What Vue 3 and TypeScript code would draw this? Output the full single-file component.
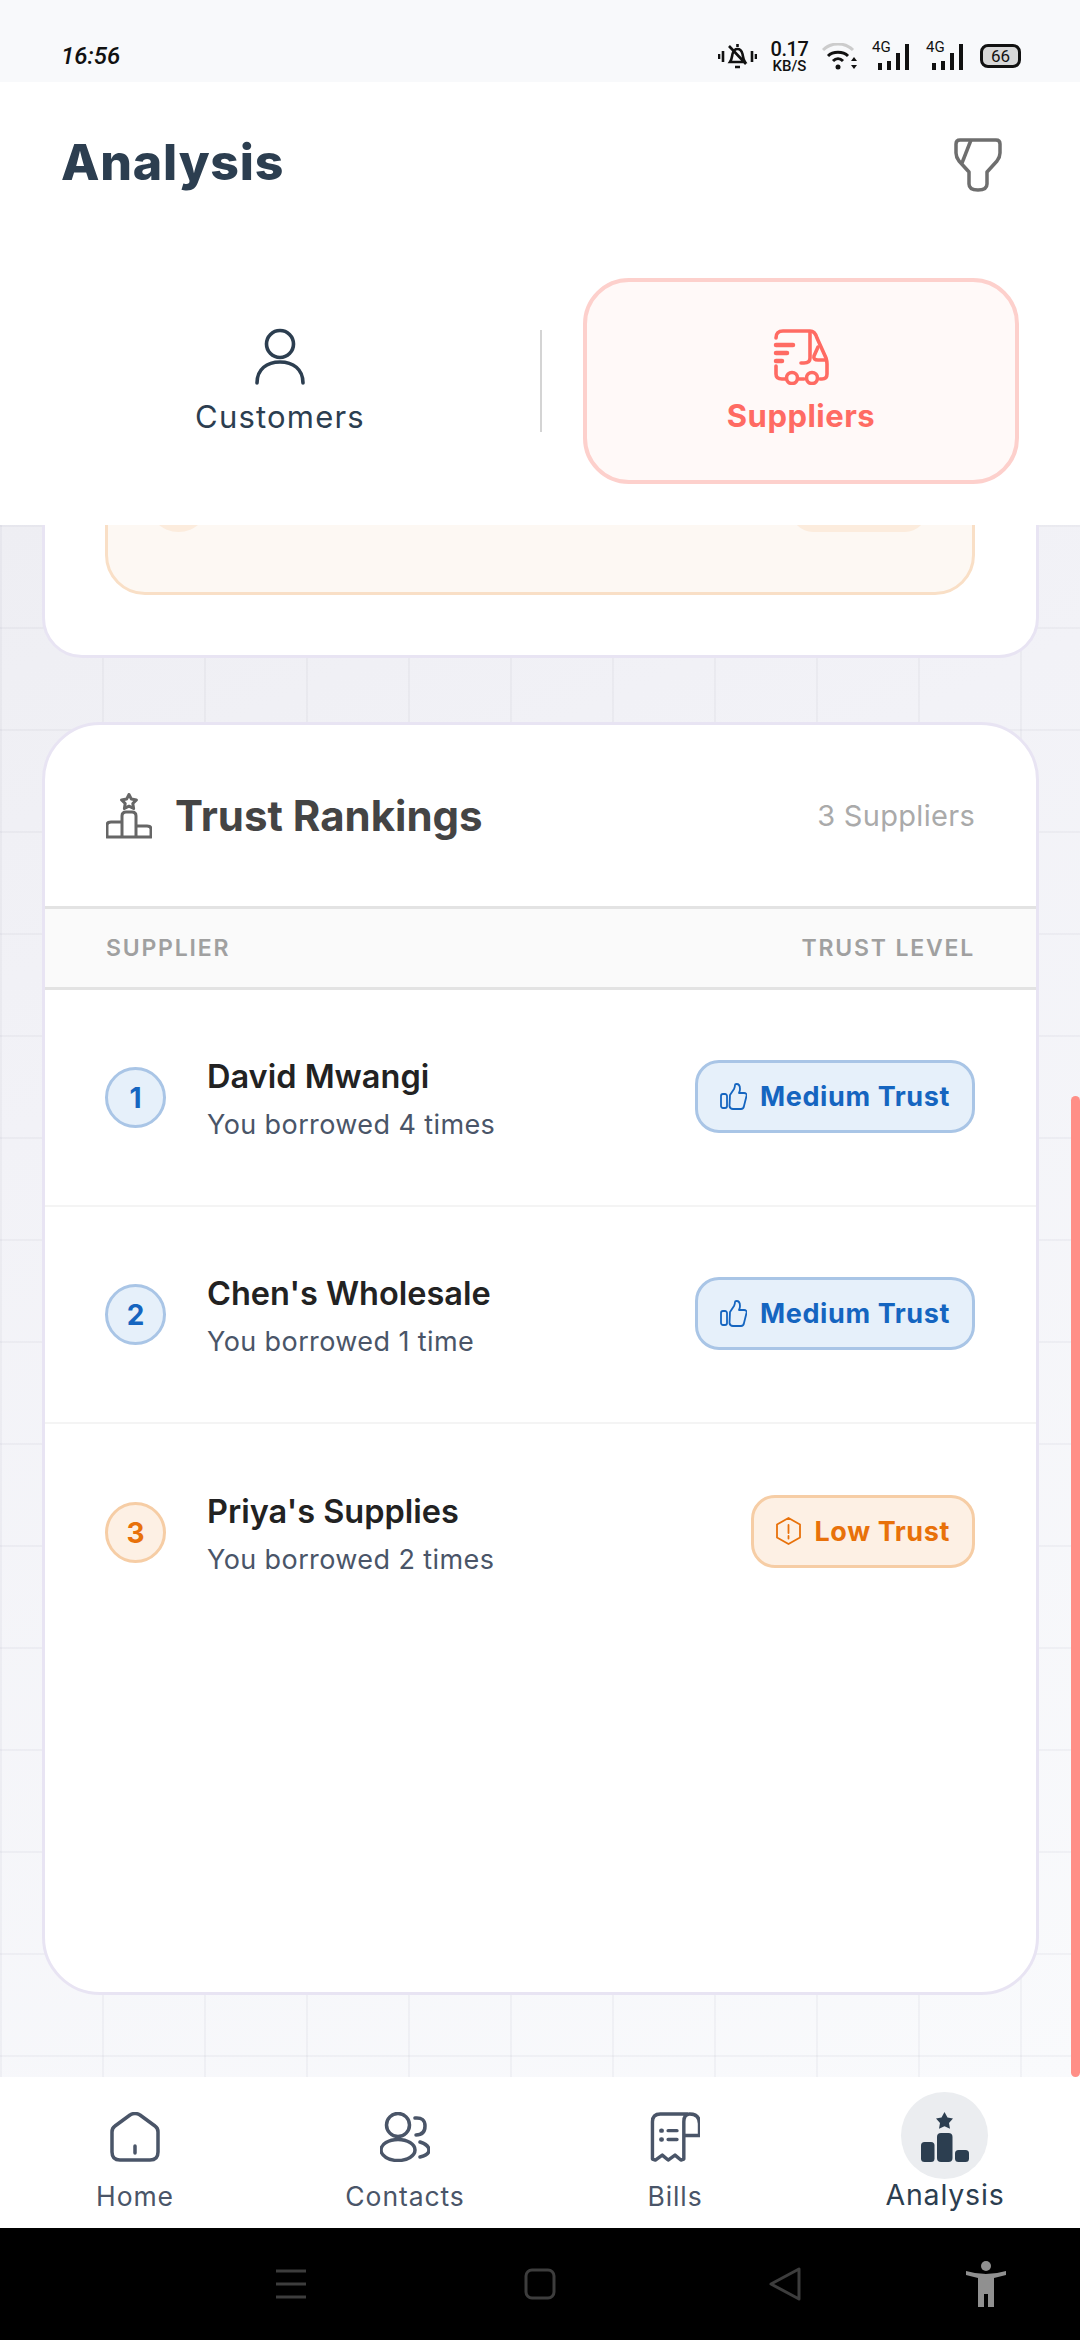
<template>
  <div class="phone">
    <!-- status bar -->
    <div class="status">
      <span class="time">16:56</span>
      <div class="status-right">
        <svg width="39" height="27" viewBox="0 0 39 27" fill="none" stroke="#111" stroke-width="2.6">
          <path d="M19.5 1v3M12 19c2-3 2-6 2.500-8 .8-3 3-5 5-5s4.200 2 5 5c.5 2 .5 5 2.500 8zM17 24h5M11 3l17 18" />
          <path d="M1 11v5M5 8v11M34 8v11M38 11v5" />
        </svg>
        <div class="speed"><b>0.17</b><small>KB/S</small></div>
        <svg width="36" height="27" viewBox="0 0 36 27" fill="none" stroke="#111" stroke-width="3">
          <path d="M1 7C9 -1 23 -1 31 7" stroke="#ccc" />
          <path d="M6 13c5-5 15-5 20 0M11 18c3-3 7-3 10 0" />
          <circle cx="16" cy="24" r="2.500" fill="#111" stroke="none" />
          <path d="M32 14l-3 4h6zM32 26l-3-4h6z" fill="#111" stroke="none" />
        </svg>
        <div v-for="n in 2" :key="n" class="sim">
          <span class="g">4G</span>
          <i style="height: 7px"></i><i style="height: 9px"></i><i style="height: 17px"></i><i style="height: 26px"></i>
        </div>
        <div class="battery"><span>66</span></div>
      </div>
    </div>

    <!-- header + tabs -->
    <header class="head">
      <div class="title-row">
        <h1>Analysis</h1>
        <svg class="filter" width="48" height="54" viewBox="0 0 48 54" fill="none" stroke="#6e6e6e" stroke-width="3.5" stroke-linejoin="round">
          <path d="M6 2H42Q46 2 46 6V15Q46 19 43 23L33 34V46Q33 52 24 52Q15 52 15 46V34L5 23Q2 19 2 15V6Q2 2 6 2Z" />
          <path d="M17 2L8 25" />
        </svg>
      </div>
      <div class="tabs">
        <div class="tab">
          <svg width="50" height="58" viewBox="0 0 50 58" fill="none" stroke="#2c3e50" stroke-width="3.6" stroke-linecap="round">
            <circle cx="25" cy="16" r="13.500" />
            <path d="M2 55c0-14 10-21 23-21s23 7 23 21" />
          </svg>
          <span>Customers</span>
        </div>
        <div class="sep"></div>
        <div class="tab active">
          <svg width="56" height="56" viewBox="0 0 56 56" fill="none" stroke="#ff6b63" stroke-width="3.6" stroke-linecap="round" stroke-linejoin="round">
            <path d="M3 9q0-7 7-7h27q5 0 7 7l9 20q1 3 1 6v10q0 5-5 5h-2M3 37v8q0 5 6 5h3M26 50h5" />
            <path d="M37 3v26q0 5-6 5h-3M45 18l-4 9q-1 4 4 4h8" />
            <circle cx="19" cy="49" r="5.500" />
            <circle cx="39" cy="49" r="5.500" />
            <path d="M3 16h17" stroke-width="4.500" />
            <path d="M3 24h11" stroke-width="4.500" />
            <path d="M3 32h6" stroke-width="4.500" />
          </svg>
          <span>Suppliers</span>
        </div>
      </div>
    </header>

    <!-- scrolled content -->
    <main class="scroll">
      <section class="card card-top">
        <div class="warn-box">
          <div class="warn-dot"></div>
          <div class="warn-pill"></div>
        </div>
      </section>

      <section class="card card-rank">
        <div class="rank-head">
          <div class="rank-title">
            <svg width="46" height="46" viewBox="0 0 46 46" fill="none" stroke="#666" stroke-width="3" stroke-linejoin="round">
              <path d="M23 1.500l2.400 4.600 5 .8-3.600 3.600.8 5-4.600-2.300-4.600 2.300.8-5-3.600-3.600 5-.8z" />
              <path d="M16 44V23q0-4 4-4h6q4 0 4 4v21M16 29H5q-4 0-4 3v12h44v-8q0-3-4-3H30" />
            </svg>
            <h2>Trust Rankings</h2>
          </div>
          <span class="count">3 Suppliers</span>
        </div>
        <div class="table-head">
          <span>SUPPLIER</span>
          <span>TRUST LEVEL</span>
        </div>
        <div v-for="s in suppliers" :key="s.rank" class="row">
          <div class="rank" :class="s.level">{{ s.rank }}</div>
          <div class="who">
            <div class="name">{{ s.name }}</div>
            <div class="sub">{{ s.sub }}</div>
          </div>
          <div class="badge" :class="s.level">
            <svg v-if="s.level === 'medium'" width="27" height="27" viewBox="0 0 27 27" fill="none" stroke="currentColor" stroke-width="1.800" stroke-linejoin="round">
              <rect x="1" y="11" width="6" height="14" rx="2" />
              <path d="M10 12l4-6q1-2 1-4 0-1 1.500-1 3.500 0 3.500 5 0 2-1 4h5q3 0 2.500 3l-2.500 10q-.5 3-3 3h-8q-3 0-3.500-3z" />
            </svg>
            <svg v-else width="25" height="28" viewBox="0 0 25 28" fill="none" stroke="currentColor" stroke-width="1.800" stroke-linejoin="round">
              <path d="M12.500 1L24 7.500v13L12.500 27 1 20.500v-13z" />
              <path d="M12.500 8v8M12.500 19v2.500" stroke-linecap="round" />
            </svg>
            <span>{{ s.label }}</span>
          </div>
        </div>
      </section>

      <div class="scrollbar"></div>
    </main>

    <!-- bottom navigation -->
    <nav class="nav">
      <div class="nav-item">
        <svg width="50" height="50" viewBox="0 0 50 50" fill="none" stroke="#4a5568" stroke-width="3.500" stroke-linecap="round" stroke-linejoin="round">
          <path d="M2 20q0-4 3-6L20 3q5-3 10 0l15 11q3 2 3 6v20q0 8-8 8H10q-8 0-8-8z" />
          <path d="M25 34v7" />
        </svg>
        <span>Home</span>
      </div>
      <div class="nav-item">
        <svg width="50" height="50" viewBox="0 0 50 50" fill="none" stroke="#4a5568" stroke-width="3.500" stroke-linecap="round">
          <circle cx="18" cy="13" r="11.500" />
          <ellipse cx="18" cy="38" rx="17" ry="10.500" />
          <path d="M35 6q10-1 10 8t-9 9M40 30q9 3 9 8t-9 7" />
        </svg>
        <span>Contacts</span>
      </div>
      <div class="nav-item">
        <svg width="50" height="50" viewBox="0 0 50 51" fill="none" stroke="#4a5568" stroke-width="3.500" stroke-linecap="round" stroke-linejoin="round">
          <path d="M38 2H10q-8 0-8 8v38l3 1 7-5 6 5 7-5 6 5 3-1V10q0-8 6-8q10 0 10 10v12H36" />
          <path d="M18 19h9M18 28h9" />
          <path d="M11 19h.5M11 28h.5" stroke-width="4.500" />
        </svg>
        <span>Bills</span>
      </div>
      <div class="nav-item on">
        <div class="halo"></div>
        <svg width="48" height="50" viewBox="0 0 48 50" fill="#2c3e50">
          <path d="M23.500 0l3 5.500 5.500 1-4 4.500 1 5.800-5.500-2.600-5.500 2.600 1-5.800-4-4.500 5.500-1z" />
          <rect x="0" y="30" width="13.500" height="20" rx="3.500" />
          <rect x="16" y="21" width="15.500" height="29" rx="4" />
          <rect x="34" y="38" width="14" height="12" rx="3.500" />
        </svg>
        <span>Analysis</span>
      </div>
    </nav>

    <!-- android buttons -->
    <div class="sys">
      <svg width="32" height="30" viewBox="0 0 32 30" stroke="#3d3d3d" stroke-width="3"><path d="M1 2h30M1 15h30M1 28h30" /></svg>
      <svg width="32" height="32" viewBox="0 0 32 32" fill="none" stroke="#3d3d3d" stroke-width="3"><rect x="2" y="2" width="28" height="28" rx="6" /></svg>
      <svg width="33" height="34" viewBox="0 0 33 34" fill="none" stroke="#3d3d3d" stroke-width="3" stroke-linejoin="round"><path d="M30 2v30L2 17z" /></svg>
      <svg width="40" height="46" viewBox="0 0 40 46" fill="#909090">
        <circle cx="20" cy="5" r="5" />
        <path d="M0 10q10 3 20 3t20-3l0 4-12 3v29h-6V33h-4v13h-6V17L0 14z" />
      </svg>
    </div>
  </div>
</template>

<script setup lang="ts">
interface Supplier {
  rank: number
  name: string
  sub: string
  level: 'medium' | 'low'
  label: string
}

const suppliers: Supplier[] = [
  { rank: 1, name: 'David Mwangi', sub: 'You borrowed 4 times', level: 'medium', label: 'Medium Trust' },
  { rank: 2, name: "Chen's Wholesale", sub: 'You borrowed 1 time', level: 'medium', label: 'Medium Trust' },
  { rank: 3, name: "Priya's Supplies", sub: 'You borrowed 2 times', level: 'low', label: 'Low Trust' }
]
</script>

<style>
html,
body {
  margin: 0;
  background: #000;
}
</style>

<style scoped>
.phone {
  width: 1080px;
  height: 2340px;
  display: flex;
  flex-direction: column;
  overflow: hidden;
  font-family: Inter, "Noto Sans", sans-serif;
}

.status {
  height: 82px;
  flex: none;
  background: #f8f9fb;
  display: flex;
  justify-content: space-between;
  align-items: center;
  box-sizing: border-box;
  padding: 30px 59px 0 61px;
  color: #111;
}
.time {
  font: italic 500 24px Roboto, sans-serif;
}
.status-right {
  display: flex;
  align-items: center;
  gap: 14px;
}
.speed {
  width: 37px;
  display: flex;
  flex-direction: column;
  align-items: center;
  line-height: 1;
  font-family: Roboto, sans-serif;
}
.speed b {
  font-size: 20px;
  font-weight: 500;
  letter-spacing: -0.4px;
}
.speed small {
  font-size: 15px;
  font-weight: 500;
}
.sim {
  display: flex;
  align-items: flex-end;
  gap: 5px;
  width: 40px;
  height: 27px;
  position: relative;
  padding-left: 6px;
  box-sizing: border-box;
}
.sim i {
  width: 4px;
  background: #111;
  display: block;
}
.sim .g {
  position: absolute;
  left: 0;
  top: -3px;
  font: 400 15px/1 Roboto, sans-serif;
}
.battery {
  width: 41px;
  height: 24px;
  box-sizing: border-box;
  border: 3px solid #111;
  border-radius: 8px;
  background: #d8d8d8;
  display: flex;
  align-items: center;
  justify-content: center;
  font: 400 17px Roboto, sans-serif;
}

.head {
  height: 443px;
  flex: none;
  background: #fff;
  box-sizing: border-box;
  padding: 51px 62px 0 61px;
  position: relative;
  z-index: 1;
}
.title-row {
  display: flex;
  justify-content: space-between;
  align-items: flex-start;
  height: 63px;
}
h1 {
  margin: 0;
  font-size: 50px;
  line-height: 58px;
  font-weight: 800;
  color: #2c3e50;
  letter-spacing: 0.8px;
}
.filter {
  margin: 5px 16px 0 0;
}
.tabs {
  display: flex;
  align-items: center;
  margin-top: 82px;
}
.tab {
  width: 436px;
  height: 206px;
  flex: none;
  box-sizing: border-box;
  display: flex;
  flex-direction: column;
  align-items: center;
  justify-content: center;
  gap: 12px;
  font-size: 31px;
  letter-spacing: 1.2px;
  color: #2c3e50;
}
.tab:first-child {
  width: 438px;
}
.sep {
  width: 2px;
  height: 102px;
  flex: none;
  background: #d4d4d4;
  margin: 0 41px;
}
.tab.active {
  background: #fff9f8;
  border: 4px solid #fdd0cc;
  border-radius: 46px;
  color: #ff6b63;
  font-weight: 700;
  letter-spacing: 0.5px;
}

.scroll {
  flex: 1;
  min-height: 0;
  position: relative;
  overflow: hidden;
  background-image:
    linear-gradient(to right, rgba(60, 60, 100, 0.045) 2px, transparent 2px),
    linear-gradient(to bottom, rgba(60, 60, 100, 0.045) 2px, transparent 2px),
    linear-gradient(155deg, #eeeef3 0%, #f2f2f7 30%, #f9fafc 100%);
  background-size: 102px 102px, 102px 102px, 100% 100%;
}
.card {
  margin: 0 41px 0 42px;
  box-sizing: border-box;
  background: #fff;
  border: 3px solid #e8e4f3;
  border-radius: 40px;
}
.card-top {
  height: 233px;
  margin-top: -100px;
  padding: 0 61px 0 60px;
  display: flex;
  align-items: flex-end;
}
.warn-box {
  flex: 1;
  height: 200px;
  margin-bottom: 60px;
  box-sizing: border-box;
  background: #fdf8f3;
  border: 3px solid #f9dfc6;
  border-radius: 40px;
  display: flex;
  justify-content: space-between;
  padding: 0 45px 60px 40px;
  align-items: flex-end;
}
.warn-dot {
  width: 61px;
  height: 61px;
  border-radius: 50%;
  background: #fcecdd;
}
.warn-pill {
  width: 136px;
  height: 60px;
  border-radius: 22px;
  background: #fcecdd;
}
.card-rank {
  height: 1273px;
  margin-top: 64px;
  overflow: hidden;
  border-radius: 58px;
}
.rank-head {
  height: 181px;
  display: flex;
  justify-content: space-between;
  align-items: center;
  padding: 0 61px;
  box-sizing: border-box;
}
.rank-title {
  display: flex;
  align-items: center;
  gap: 23px;
}
h2 {
  margin: 0;
  font-size: 42px;
  font-weight: 700;
  color: #444;
}
.count {
  font-size: 29px;
  letter-spacing: 0.3px;
  color: #aaa;
}
.table-head {
  height: 84px;
  box-sizing: border-box;
  background: #fafafa;
  border-top: 3px solid #e3e3e3;
  border-bottom: 3px solid #e3e3e3;
  display: flex;
  justify-content: space-between;
  align-items: center;
  padding: 0 61px;
  font-size: 23px;
  font-weight: 600;
  color: #a0a0a0;
  letter-spacing: 1.8px;
}
.row {
  height: 217px;
  box-sizing: border-box;
  display: flex;
  align-items: center;
  padding: 0 61px 0 60px;
  border-bottom: 2px solid #f4f4f4;
}
.row:last-child {
  border-bottom: 0;
}
.rank {
  width: 61px;
  height: 61px;
  flex: none;
  box-sizing: border-box;
  border-radius: 50%;
  border: 3px solid;
  display: flex;
  align-items: center;
  justify-content: center;
  font-size: 28px;
  font-weight: 700;
  margin-right: 41px;
}
.rank.medium,
.badge.medium {
  background: #e6f0fa;
  border-color: #a9c5e6;
  color: #1565c0;
}
.rank.low,
.badge.low {
  background: #fdf0e4;
  border-color: #f6cda5;
  color: #e8710a;
}
.who {
  flex: 1;
  padding-top: 3px;
}
.name {
  font-size: 32.5px;
  font-weight: 600;
  color: #222;
  line-height: 42px;
}
.sub {
  font-size: 27px;
  letter-spacing: 0.4px;
  color: #4a5568;
  line-height: 36px;
  margin-top: 9px;
}
.badge {
  height: 73px;
  box-sizing: border-box;
  border: 3px solid;
  border-radius: 24px;
  display: flex;
  align-items: center;
  gap: 13px;
  padding: 0 22px;
  margin-top: -3px;
  font-size: 27px;
  font-weight: 700;
  letter-spacing: 0.6px;
}
.scrollbar {
  position: absolute;
  right: 0;
  top: 571px;
  width: 9px;
  bottom: 0;
  background: #ff8f87;
  border-radius: 5px;
}

.nav {
  height: 151px;
  flex: none;
  background: #fff;
  display: grid;
  grid-template-columns: repeat(4, 270px);
  position: relative;
}
.nav-item {
  position: relative;
  display: flex;
  flex-direction: column;
  align-items: center;
  padding-top: 35px;
  gap: 18px;
  font-size: 26.5px;
  color: #4a5568;
  letter-spacing: 0.9px;
}
.nav-item svg,
.nav-item span {
  position: relative;
}
.nav-item.on {
  color: #2c3e50;
  font-size: 28.5px;
  letter-spacing: 0.8px;
  gap: 15px;
}
.halo {
  position: absolute;
  top: 15px;
  left: 91px;
  width: 87px;
  height: 87px;
  border-radius: 50%;
  background: #ebedf0;
}

.sys {
  height: 112px;
  flex: none;
  background: #000;
  display: flex;
  align-items: center;
  padding-left: 275px;
  gap: 217px;
}
.sys svg:nth-child(3) {
  margin-left: -4px;
}
.sys svg:nth-child(4) {
  margin-left: -53px;
}
</style>
